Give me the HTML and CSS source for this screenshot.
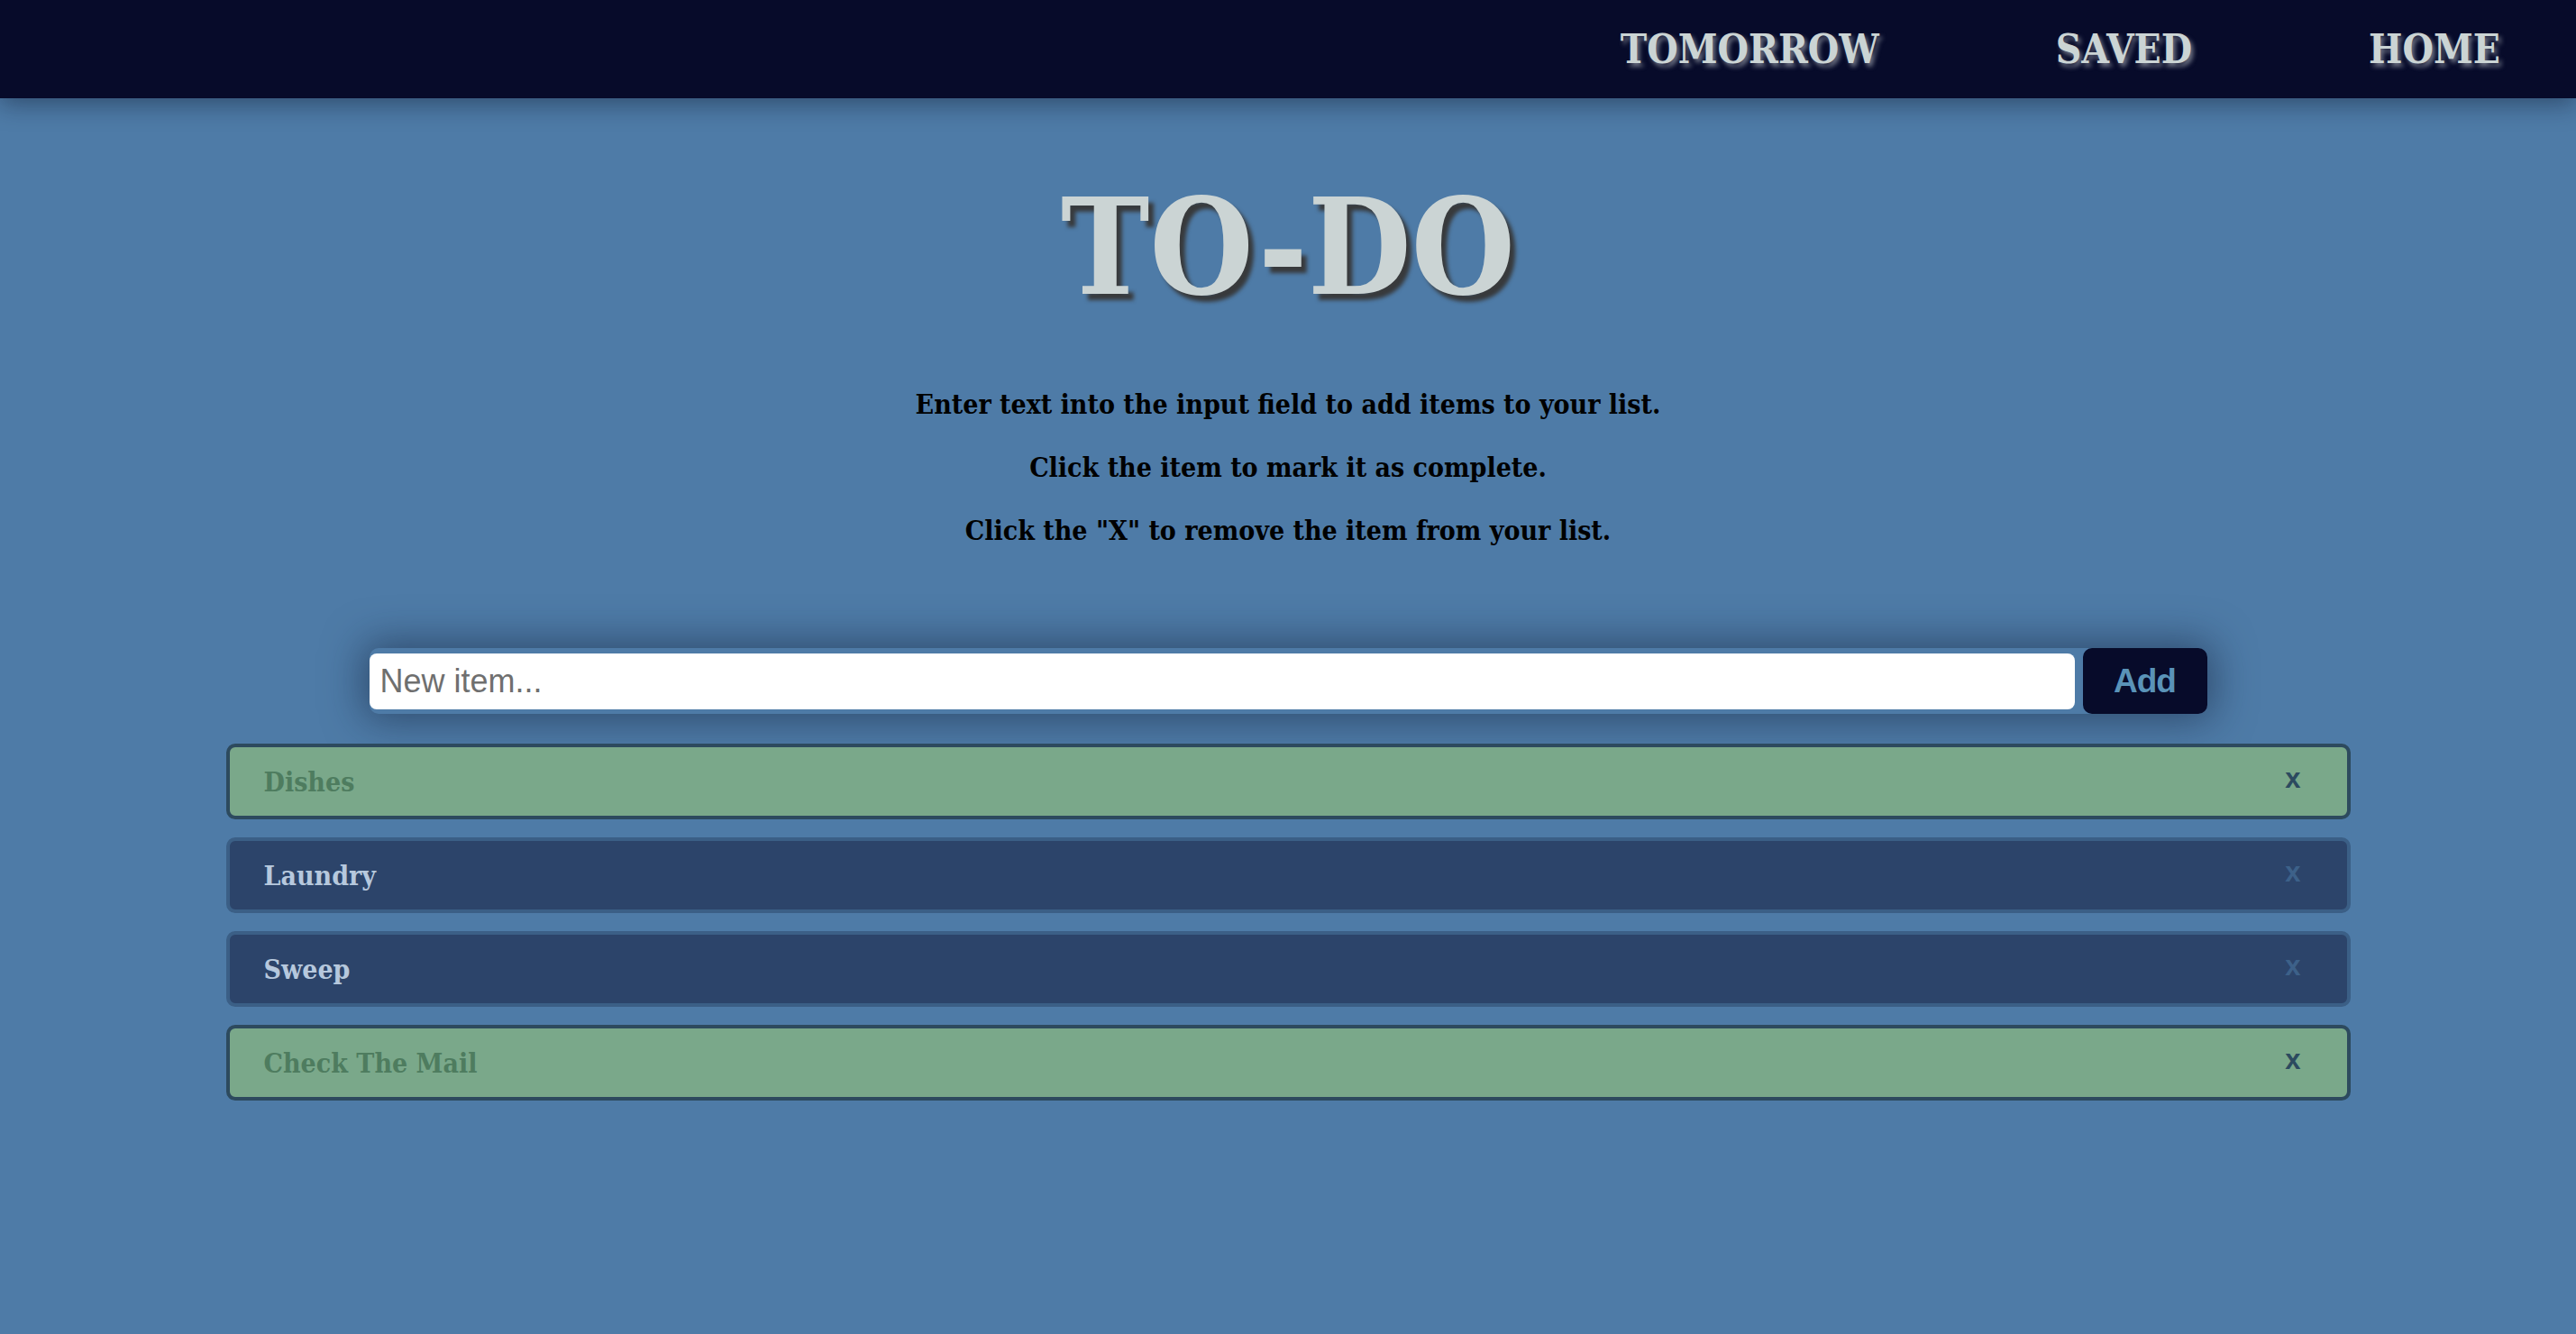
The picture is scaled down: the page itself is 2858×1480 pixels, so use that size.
FILE: index.html
```html
<!DOCTYPE html>
<html lang="en">
<head>
<meta charset="utf-8">
<title>To-Do</title>
<link rel="stylesheet" href="styles.css">
</head>
<body>
<nav class="topbar">
  <a class="nav-link" href="#">TOMORROW</a>
  <a class="nav-link" href="#">SAVED</a>
  <a class="nav-link" href="#">HOME</a>
</nav>
<main class="page">
  <h1 class="title">TO-DO</h1>
  <div class="instructions">
    <p>Enter text into the input field to add items to your list.</p>
    <p>Click the item to mark it as complete.</p>
    <p>Click the "X" to remove the item from your list.</p>
  </div>
  <form class="entry">
    <input class="entry-input" type="text" placeholder="New item...">
    <button class="entry-btn" type="button">Add</button>
  </form>
  <ul class="list">
    <li class="item done"><span class="item-text">Dishes</span><span class="item-x">x</span></li>
    <li class="item"><span class="item-text">Laundry</span><span class="item-x">x</span></li>
    <li class="item"><span class="item-text">Sweep</span><span class="item-x">x</span></li>
    <li class="item done"><span class="item-text">Check The Mail</span><span class="item-x">x</span></li>
  </ul>
</main>
</body>
</html>
```

FILE: styles.css
```css
* { box-sizing: border-box; }
html, body { margin: 0; padding: 0; }
body {
  background: #4e7ba7;
  min-height: 1480px;
  font-family: "DejaVu Serif", "Liberation Serif", serif;
  font-stretch: condensed;
  overflow: hidden;
}
.topbar {
  height: 109px;
  background: #070b2a;
  display: flex;
  justify-content: flex-end;
  align-items: center;
  gap: 196px;
  padding-right: 84px;
  box-shadow: 0 6px 26px rgba(10, 20, 40, 0.45);
  position: relative;
  z-index: 2;
}
.nav-link {
  color: #cbd4d4;
  text-decoration: none;
  font-weight: bold;
  font-size: 44px;
  line-height: 1;
  text-shadow: 3px 4px 5px rgba(190, 195, 200, 0.55);
}
.page {
  display: flex;
  flex-direction: column;
  align-items: center;
}
.title {
  margin: 92px 0 0;
  font-size: 147px;
  line-height: 1;
  font-weight: bold;
  color: #cbd4d4;
  text-shadow: 6px 7px 4px #383a3c;
}
.instructions {
  margin-top: 66px;
  text-align: center;
}
.instructions p {
  margin: 0;
  font-size: 30px;
  line-height: 70px;
  font-weight: bold;
  color: #000;
}
.entry {
  margin: 95px 0 0;
  display: flex;
  align-items: center;
  gap: 9px;
  box-shadow: 0 0 45px 6px rgba(20, 35, 60, 0.55);
  border-radius: 10px;
}
.entry-input {
  width: 1892px;
  height: 62px;
  border: none;
  border-radius: 8px;
  padding: 0 12px;
  font-family: "Liberation Sans", Arial, sans-serif;
  font-size: 36px;
  color: #333;
  background: #fff;
  outline: none;
}
.entry-input::placeholder { color: #6f6f6f; }
.entry-btn {
  width: 138px;
  height: 73px;
  border: none;
  border-radius: 10px;
  background: #070b2a;
  color: #5a93b8;
  font-family: "Liberation Sans", Arial, sans-serif;
  font-weight: bold;
  font-size: 37px;
  letter-spacing: -1px;
  padding: 0;
}
.list {
  list-style: none;
  margin: 33px 0 0;
  padding: 0;
  width: 2357px;
  display: flex;
  flex-direction: column;
  gap: 20px;
}
.item {
  height: 84px;
  border: 4px solid #3b5f86;
  border-radius: 10px;
  background: #2c446a;
  display: flex;
  align-items: center;
  justify-content: space-between;
  padding: 0 51px 0 38px;
}
.item-text {
  font-weight: bold;
  font-size: 30px;
  color: #b6c8dd;
}
.item-x {
  font-family: "Liberation Sans", Arial, sans-serif;
  font-weight: bold;
  font-size: 31px;
  color: #3d6189;
  line-height: 1;
  padding-bottom: 8px;
}
.item.done {
  background: #7aa88a;
  border-color: #2d4a5e;
}
.item.done .item-text { color: #4e7c5f; }
.item.done .item-x { color: #2c4a5f; }
```
